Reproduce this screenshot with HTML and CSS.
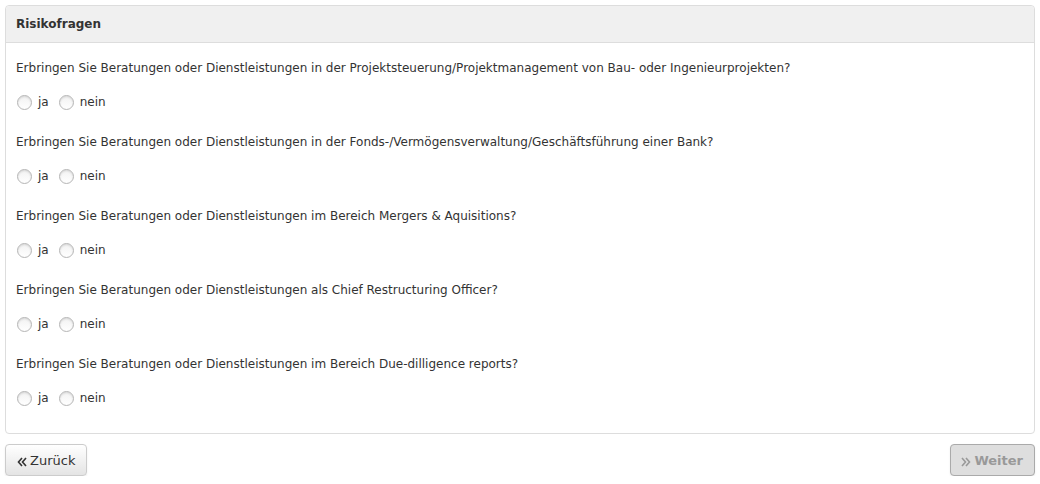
FILE: index.html
```html
<!DOCTYPE html>
<html lang="de">
<head>
<meta charset="utf-8">
<link rel="stylesheet" href="styles.css">
</head>
<body>
<div class="page">
  <div class="panel">
    <div class="panel-head">Risikofragen</div>
    <div class="panel-body">
      <div class="q">
        <div class="q-text">Erbringen Sie Beratungen oder Dienstleistungen in der Projektsteuerung/Projektmanagement von Bau- oder Ingenieurprojekten?</div>
        <div class="opts"><label class="opt"><span class="radio"></span>ja</label><label class="opt"><span class="radio"></span>nein</label></div>
      </div>
      <div class="q">
        <div class="q-text">Erbringen Sie Beratungen oder Dienstleistungen in der Fonds-/Vermögensverwaltung/Geschäftsführung einer Bank?</div>
        <div class="opts"><label class="opt"><span class="radio"></span>ja</label><label class="opt"><span class="radio"></span>nein</label></div>
      </div>
      <div class="q">
        <div class="q-text">Erbringen Sie Beratungen oder Dienstleistungen im Bereich Mergers &amp; Aquisitions?</div>
        <div class="opts"><label class="opt"><span class="radio"></span>ja</label><label class="opt"><span class="radio"></span>nein</label></div>
      </div>
      <div class="q">
        <div class="q-text">Erbringen Sie Beratungen oder Dienstleistungen als Chief Restructuring Officer?</div>
        <div class="opts"><label class="opt"><span class="radio"></span>ja</label><label class="opt"><span class="radio"></span>nein</label></div>
      </div>
      <div class="q">
        <div class="q-text">Erbringen Sie Beratungen oder Dienstleistungen im Bereich Due-dilligence reports?</div>
        <div class="opts"><label class="opt"><span class="radio"></span>ja</label><label class="opt"><span class="radio"></span>nein</label></div>
      </div>
    </div>
  </div>
  <div class="actions">
    <button class="btn"><svg class="chev" width="10" height="10" viewBox="0 0 10 10"><path d="M5 1 L1.5 5 L5 9 M9 1 L5.5 5 L9 9" fill="none" stroke="#333" stroke-width="1.6"/></svg>Zurück</button>
    <button class="btn btn-disabled"><svg class="chev" width="10" height="10" viewBox="0 0 10 10"><path d="M1 1 L4.5 5 L1 9 M5 1 L8.5 5 L5 9" fill="none" stroke="#999" stroke-width="1.6"/></svg>Weiter</button>
  </div>
</div>
</body>
</html>
```
FILE: styles.css
```css
html, body { margin: 0; padding: 0; background: #fff; }
body { font-family: "DejaVu Sans", Verdana, sans-serif; font-size: 12px; color: #333; }
.page { padding: 5px 5px 0 5px; }
.panel { border: 1px solid #ddd; border-radius: 4px; }
.panel-head { background: #f0f0f0; border-bottom: 1px solid #ddd; border-radius: 4px 4px 0 0; height: 36px; line-height: 36px; padding: 0 10px; font-weight: bold; color: #333; }
.panel-body { padding: 15px 10px 5px 10px; }
.q { height: 74px; }
.q-text { height: 20px; line-height: 20px; }
.opts { display: flex; align-items: center; height: 20px; margin-top: 14px; gap: 9px; }
.opt { display: flex; align-items: center; gap: 6px; }
.radio { display: inline-block; width: 13px; height: 13px; border-radius: 50%; border: 1px solid #b5b5b5; background: linear-gradient(#f2f2f2, #ffffff); box-shadow: inset 0 1px 2px rgba(0,0,0,0.12); margin-left: 1px; }
.actions { display: flex; justify-content: space-between; margin-top: 10px; }
.btn { display: flex; align-items: center; font-family: "DejaVu Sans", Verdana, sans-serif; font-size: 13px; height: 32px; padding: 0 11px 0 11px; border: 1px solid #ccc; border-radius: 4px; background: linear-gradient(#ffffff, #e4e4e4); color: #333; box-shadow: 0 1px 2px rgba(0,0,0,0.08); }
.chev { margin-right: 3px; position: relative; top: 2px; flex: none; }
.btn-disabled { background: #dedede; color: #999; font-weight: bold; border-color: #aaa; padding: 0 11px 0 10px; }
```
